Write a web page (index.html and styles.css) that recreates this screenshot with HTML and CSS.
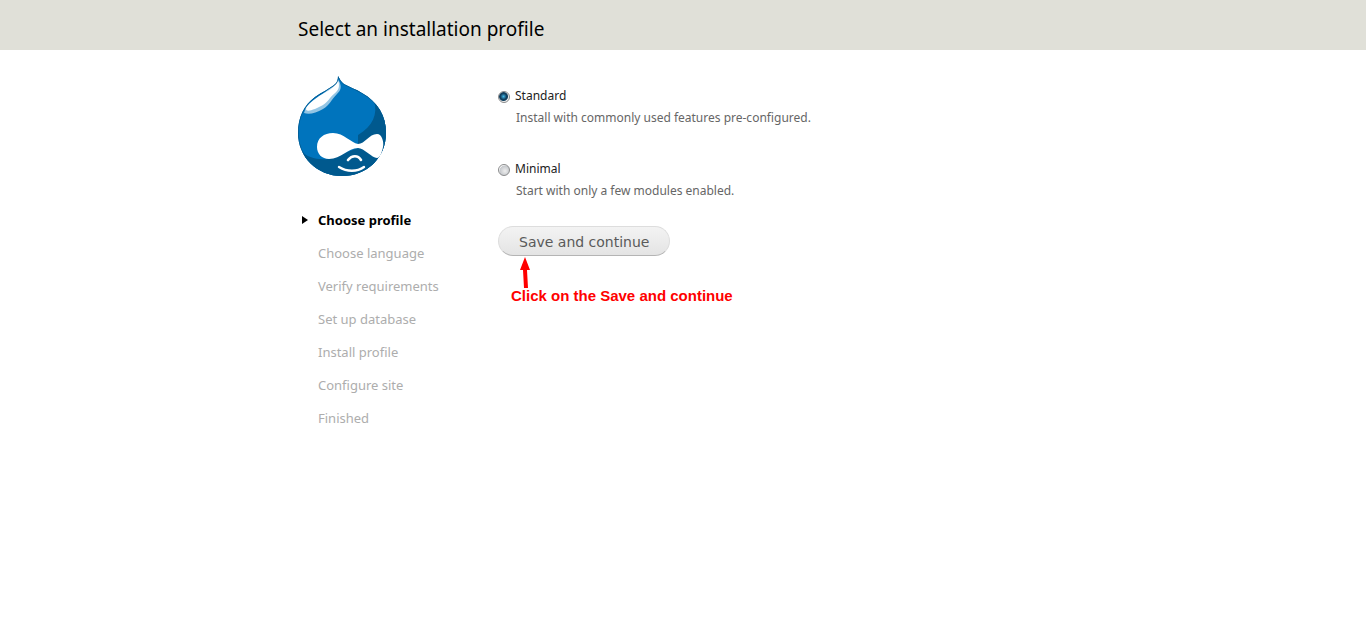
FILE: index.html
```html
<!DOCTYPE html>
<html lang="en">
<head>
<meta charset="utf-8">
<meta name="viewport" content="width=device-width, initial-scale=1">
<title>Select an installation profile</title>
<link rel="stylesheet" href="styles.css">
</head>
<body>
<header class="branding">
  <h1 class="page-title">Select an installation profile</h1>
</header>
<div class="page">
  <aside class="sidebar">
    <svg class="logo" viewBox="0 0 88 100" role="img" aria-label="Drupal">
      <defs>
        <clipPath id="drop"><path d="M40 0C42 3 43 6 46 8C51 11 58 13 64 17C80 26 88 40 88 57C88 82 69 100 44 100C19 100 0 81 0 57C0 41 6 29 17 21C24 16 31 13 36 9C39 7 40 4 40 0Z"/></clipPath>
      </defs>
      <g clip-path="url(#drop)">
        <path fill="#0074bd" d="M0 0H88V100H0Z"/>
        <path fill="#00598e" d="M76 25C80 38 75 50 60 59L60 72L30 83C18 84 9 81 3 75L8 100H88V35Z"/>
        <path fill="#93c5e4" d="M41 5C44 11 43 14 39 18C33 24 32 29 25 33C18 37 11 39 6 37L8 31Z"/>
        <path fill="#fff" d="M40 3C42 11 41 14 36 18C31 22 30 26 25 29C18 33 8 37 8 33C9 28 16 24 21 20C29 15 38 12 40 3Z"/>
        <path fill="none" stroke="#00598e" stroke-width="1.400" d="M40 0C42 3 43 6 46 8C51 11 58 13 64 17C80 26 88 40 88 57C88 82 69 100 44 100C19 100 0 81 0 57C0 41 6 29 17 21C24 16 31 13 36 9C39 7 40 4 40 0Z"/>
      </g>
      <path fill="#fff" d="M19 71C19 62 26 57 35 57C46 57 53 67 60 68C67 68 71 58 79 58C84 58 86 66 85 71C84 76 82 82 79 82C74 82 66 72 60 72C50 72 43 83 31 83C24 83 19 78 19 71Z"/>
      <path fill="none" stroke="#fff" stroke-width="2.600" stroke-linecap="round" d="M50 84C54 79 60 79 63 84"/>
      <path fill="none" stroke="#fff" stroke-width="2.400" stroke-linecap="round" d="M41 91C49 96 59 96 66 91"/>
    </svg>
    <ol class="tasks">
      <li class="task active">Choose profile</li>
      <li class="task">Choose language</li>
      <li class="task">Verify requirements</li>
      <li class="task">Set up database</li>
      <li class="task">Install profile</li>
      <li class="task">Configure site</li>
      <li class="task">Finished</li>
    </ol>
  </aside>
  <main class="content">
    <form class="profiles">
      <div class="profile">
        <input class="radio" type="radio" name="profile" id="standard" aria-describedby="standard-note" checked>
        <label class="label" for="standard">Standard</label>
        <p class="note" id="standard-note">Install with commonly used features pre-configured.</p>
      </div>
      <div class="profile">
        <input class="radio" type="radio" name="profile" id="minimal" aria-describedby="minimal-note">
        <label class="label" for="minimal">Minimal</label>
        <p class="note" id="minimal-note">Start with only a few modules enabled.</p>
      </div>
      <div class="actions">
        <button class="submit" type="submit">Save and continue</button>
        <div class="callout">
          <svg class="arrow" viewBox="0 0 10 31" aria-hidden="true"><path fill="#f00" d="M5 0L10 13H7L8 31H4L3 13H0Z"/></svg>
          <p class="hint">Click on the Save and continue</p>
        </div>
      </div>
    </form>
  </main>
</div>
</body>
</html>
```
FILE: styles.css
```css
* {
  box-sizing: border-box;
}

body {
  margin: 0;
  background: #fff;
  color: #000;
  font-family: "Lucida Grande", "Lucida Sans Unicode", "Noto Sans", sans-serif;
  font-size: 13px;
}

.branding {
  padding: 16px 20px 8px;
  background: #e0e0d8;
}

.page-title,
.page {
  max-width: 770px;
  margin: 0 auto;
}

.page-title {
  font-size: 19px;
  font-weight: 400;
  line-height: 26px;
}

.page {
  display: flex;
  padding-top: 26px;
}

.sidebar {
  flex: 0 0 200px;
}

.logo {
  display: block;
  width: 88px;
  height: 100px;
}

.tasks {
  margin: 28px 0 0;
  padding: 0;
  list-style: none;
}

.task {
  padding: 6px 0 7px 20px;
  color: #adadad;
  line-height: 20px;
}

.task.active {
  display: flex;
  align-items: center;
  gap: 10px;
  padding-left: 4px;
  color: #000;
  font-weight: 700;
}

.task.active::before {
  content: "";
  border: solid transparent;
  border-width: 4px 0 4px 6px;
  border-left-color: #000;
}

.content {
  flex: 1;
  min-width: 0;
  padding-top: 9px;
}

.profile {
  display: grid;
  grid-template-columns: 12px 1fr;
  align-items: center;
  column-gap: 5px;
  margin-bottom: 29px;
  font-size: 12px;
  line-height: 22px;
}

.radio {
  appearance: none;
  width: 12px;
  height: 12px;
  margin: 1px 0 0;
  border: 1px solid #8a8b8c;
  border-radius: 50%;
  background: radial-gradient(circle at 60% 60%, #eee, #c5c8cc 60%, #fff 70%);
}

.radio:checked {
  background: radial-gradient(circle at 45% 45%, #42b8e8 0, #12405f 3px, #12405f 4px, #eee 5px);
}

.label {
  color: #222;
}

.note {
  grid-column: 2;
  margin: 0 0 0 1px;
  color: #666;
}

.actions {
  display: flex;
  flex-direction: column;
  align-items: flex-start;
  margin-top: -5px;
}

.submit {
  height: 30px;
  padding: 2px 20px 0;
  border: 1px solid #ddd;
  border-bottom-color: #b4b4b4;
  border-radius: 15px;
  background: linear-gradient(#f3f3f3, #e4e4e4);
  color: #5a5a5a;
  font-family: Verdana, "DejaVu Sans", sans-serif;
  font-size: 14px;
  white-space: nowrap;
}

.callout {
  padding: 1px 0 0 13px;
}

.arrow {
  display: block;
  width: 10px;
  height: 31px;
  margin-left: 9px;
}

.hint {
  margin: 0;
  color: #f00;
  font: 700 15px/16px "Liberation Sans", Arial, sans-serif;
}
```
